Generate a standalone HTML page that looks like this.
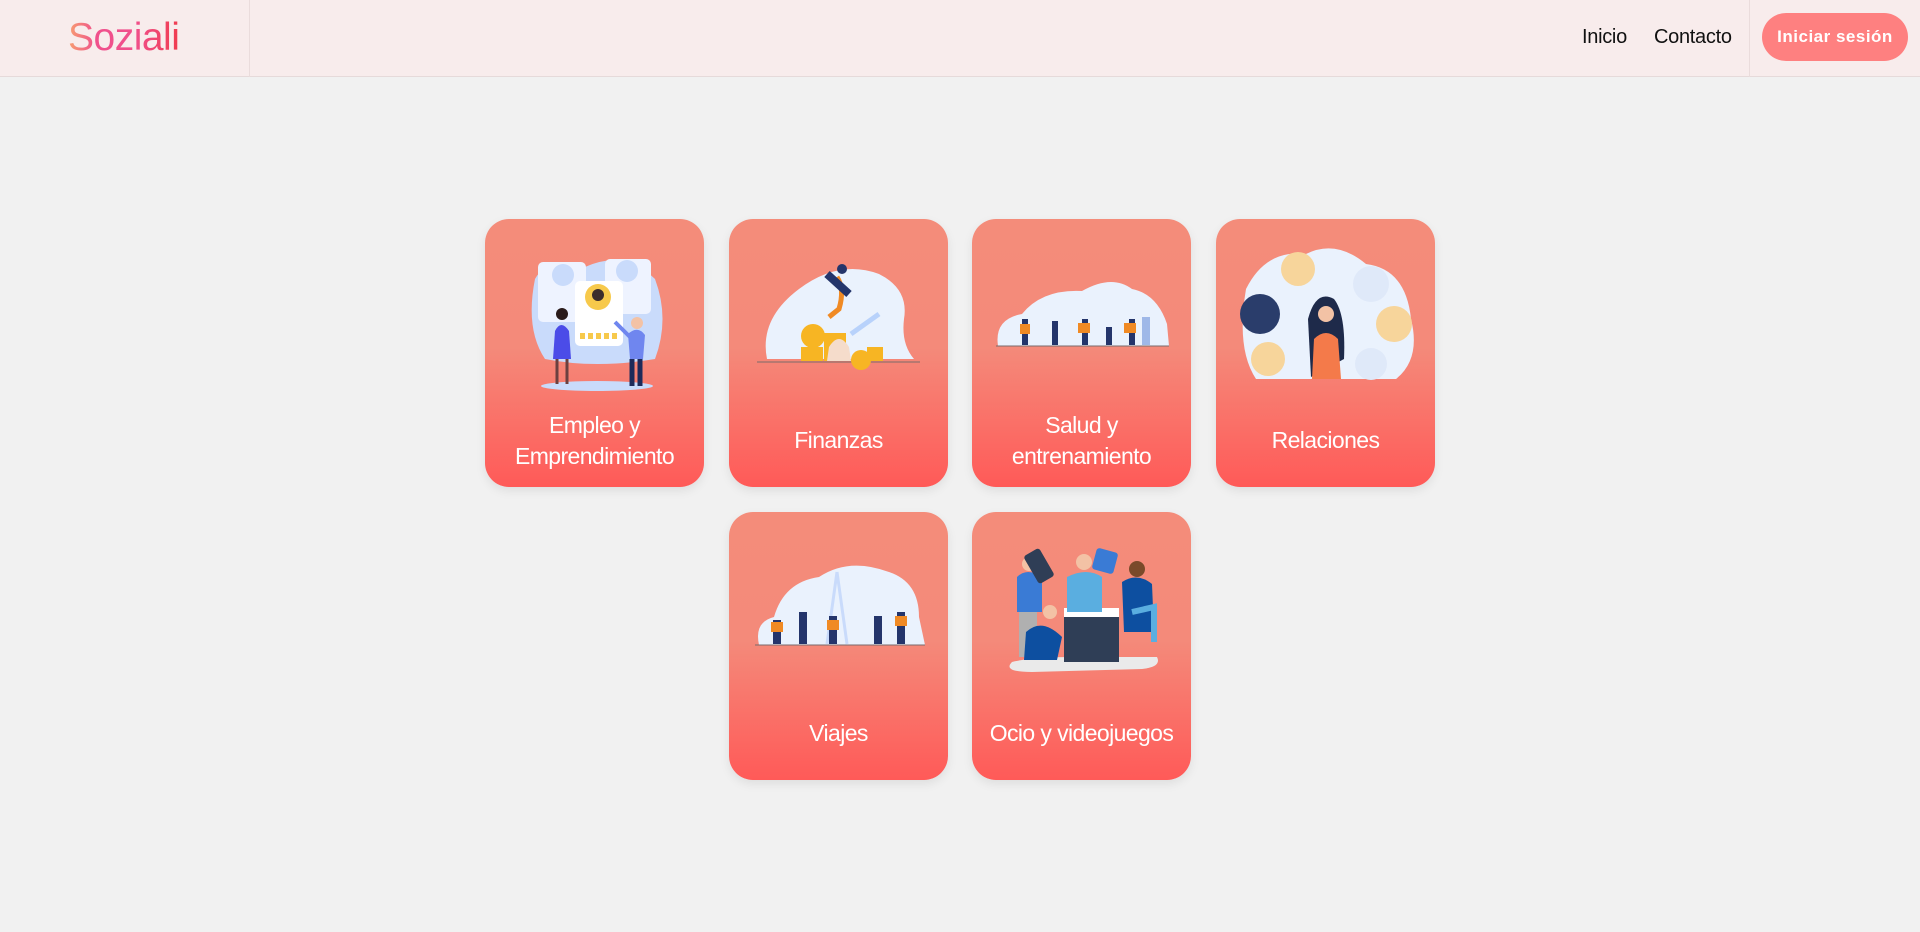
<!DOCTYPE html>
<html><head><meta charset="utf-8"><style>
*{margin:0;padding:0;box-sizing:border-box}
body{width:1920px;height:932px;background:#f1f1f1;font-family:"Liberation Sans",sans-serif;position:relative;overflow:hidden}
.hdr{position:absolute;left:0;top:0;width:1920px;height:77px;background:#f8ecec;border-bottom:1px solid #e6dada}
.logo{position:absolute;left:68px;top:16px;font-size:39px;background:linear-gradient(90deg,#f7a070,#f0508c 25%,#f0508c 60%,#f03c50);-webkit-background-clip:text;color:transparent;letter-spacing:-0.5px}
.vl{position:absolute;top:0;width:1px;height:77px;background:#eadcdc}
.nav{position:absolute;top:26px;font-size:20px;color:#111;letter-spacing:-0.3px}
.btn{position:absolute;left:1762px;top:13px;width:146px;height:48px;border-radius:24px;background:#fe8080;color:#fff;font-size:17px;font-weight:bold;text-align:center;line-height:48px;letter-spacing:.5px}
.card{position:absolute;width:219px;height:268px;border-radius:24px;background:linear-gradient(180deg,#f48c7a 0%,#f48a7a 48%,#ff5a58 100%);box-shadow:0 4px 10px rgba(0,0,0,.08);overflow:hidden}
.card svg{position:absolute;left:0;top:0}
.t{position:absolute;left:0;width:219px;text-align:center;color:#fff;font-size:23px;line-height:31px;letter-spacing:-.6px}
</style></head><body>
<div class="hdr">
<div class="logo">Soziali</div>
<div class="vl" style="left:249px"></div>
<div class="nav" style="left:1582px">Inicio</div>
<div class="nav" style="left:1654px">Contacto</div>
<div class="vl" style="left:1749px"></div>
<div class="btn">Iniciar sesión</div>
</div>

<div class="card" style="left:485px;top:219px">
<svg width="219" height="268"><path d="M50 60 Q60 40 100 48 Q140 30 170 60 Q185 100 170 140 Q110 150 60 140 Q40 110 50 60Z" fill="#c9dbfb"/>
<rect x="53" y="43" width="48" height="60" rx="5" fill="#eef3ff"/><rect x="120" y="40" width="46" height="55" rx="5" fill="#eef3ff"/>
<rect x="90" y="62" width="48" height="65" rx="5" fill="#fff"/><circle cx="113" cy="78" r="13" fill="#f7c94b"/><circle cx="113" cy="76" r="6" fill="#3b2c2c"/>
<circle cx="78" cy="56" r="11" fill="#c9dbfb"/><circle cx="142" cy="52" r="11" fill="#c9dbfb"/>
<path d="M95 117h38" stroke="#f7c94b" stroke-width="6" stroke-dasharray="5 3"/>
<ellipse cx="112" cy="167" rx="56" ry="5" fill="#c9dbfb"/>
<path d="M70 112 Q76 100 84 112 L86 140 L68 140Z" fill="#4b4ce8"/><circle cx="77" cy="95" r="6" fill="#2a1b1b"/><path d="M72 140v25M82 140v25" stroke="#6b4040" stroke-width="3"/>
<path d="M143 115 Q153 106 160 116 L158 140 L145 140Z" fill="#6f86ef"/><circle cx="152" cy="104" r="6" fill="#f3c2a5"/><path d="M147 140v27M155 140v27" stroke="#1e2a5a" stroke-width="5"/><path d="M145 118 L130 103" stroke="#6f86ef" stroke-width="4"/>
</svg><div class="t" style="top:191px">Empleo y<br>Emprendimiento</div></div>

<div class="card" style="left:729px;top:219px">
<svg width="219" height="268"><path d="M38 140 Q30 100 70 70 Q110 40 150 55 Q180 70 175 100 Q172 125 185 140Z" fill="#eaf2fd"/>
<path d="M28 143h163" stroke="#7a6a6a" stroke-width="1"/>
<circle cx="84" cy="117" r="12" fill="#f7b523"/><rect x="72" y="128" width="22" height="14" fill="#f7b523"/>
<rect x="95" y="114" width="22" height="28" fill="#f7b523"/><circle cx="132" cy="141" r="10" fill="#f7b523"/><rect x="138" y="128" width="16" height="14" fill="#f7b523"/>
<path d="M100 128 Q110 112 120 128 L122 142 L98 142Z" fill="#f5dccb"/>
<path d="M122 115 L150 95" stroke="#b8d2fb" stroke-width="5"/>
<path d="M108 58 Q116 70 110 90 L100 98" stroke="#f08a24" stroke-width="5" fill="none"/><path d="M98 55 L120 75" stroke="#24356b" stroke-width="8"/><circle cx="113" cy="50" r="5" fill="#24356b"/>
</svg><div class="t" style="top:206px">Finanzas</div></div>

<div class="card" style="left:972px;top:219px">
<svg width="219" height="268"><path d="M26 127 Q22 100 50 95 Q70 70 110 72 Q140 55 160 70 Q185 75 195 105 L197 127Z" fill="#eaf2fd"/>
<path d="M24 127h173" stroke="#7a6a6a" stroke-width="1"/>
<g fill="#24356b"><rect x="50" y="100" width="6" height="26"/><rect x="80" y="102" width="6" height="24"/><rect x="110" y="100" width="6" height="26"/><rect x="134" y="108" width="6" height="18"/><rect x="157" y="100" width="6" height="26"/></g>
<g fill="#f08a24"><rect x="48" y="105" width="10" height="10"/><rect x="106" y="104" width="12" height="10"/><rect x="152" y="104" width="12" height="10"/></g>
<rect x="170" y="98" width="8" height="28" fill="#9fb8e8"/>
</svg><div class="t" style="top:191px">Salud y<br>entrenamiento</div></div>

<div class="card" style="left:1216px;top:219px">
<svg width="219" height="268"><path d="M30 70 Q50 30 90 35 Q120 20 150 45 Q190 50 195 100 Q205 140 180 160 L40 160 Q20 130 30 70Z" fill="#eaf2fd"/>
<circle cx="44" cy="95" r="20" fill="#2a3d6b"/><circle cx="82" cy="50" r="17" fill="#f7d59b"/><circle cx="155" cy="65" r="18" fill="#dfe9f9"/><circle cx="178" cy="105" r="18" fill="#f7d59b"/><circle cx="52" cy="140" r="17" fill="#f7d59b"/><circle cx="155" cy="145" r="16" fill="#dfe9f9"/>
<path d="M92 100 Q100 70 118 80 Q130 95 128 140 L95 158 Z" fill="#1e2a4a"/><path d="M98 120 Q110 108 122 120 L125 160 L96 160Z" fill="#f47a4a"/><circle cx="110" cy="95" r="8" fill="#f3c2a5"/>
</svg><div class="t" style="top:206px">Relaciones</div></div>

<div class="card" style="left:729px;top:512px">
<svg width="219" height="268"><path d="M30 133 Q25 110 45 105 Q55 70 90 65 Q120 45 160 60 Q190 70 190 105 L196 133Z" fill="#eaf2fd"/>
<path d="M26 133h170" stroke="#7a6a6a" stroke-width="1"/>
<path d="M108 60 L98 132 M108 60 L118 132" stroke="#c9dbfb" stroke-width="3"/>
<g fill="#24356b"><rect x="44" y="108" width="8" height="24"/><rect x="70" y="100" width="8" height="32"/><rect x="100" y="104" width="8" height="28"/><rect x="145" y="104" width="8" height="28"/><rect x="168" y="100" width="8" height="32"/></g>
<g fill="#f08a24"><rect x="42" y="110" width="12" height="10"/><rect x="98" y="108" width="12" height="10"/><rect x="166" y="104" width="12" height="10"/></g>
</svg><div class="t" style="top:206px">Viajes</div></div>

<div class="card" style="left:972px;top:512px">
<svg width="219" height="268"><path d="M40 150 Q60 145 100 145 L185 145 Q190 155 170 157 L60 160 Q30 160 40 150Z" fill="#eaeaea"/>
<path d="M45 65 Q55 55 70 65 L70 100 L45 100Z" fill="#3a7bd5"/><circle cx="57" cy="52" r="7" fill="#f3c2a5"/><rect x="47" y="100" width="18" height="45" fill="#b0b0b0"/>
<rect x="58" y="38" width="18" height="32" rx="3" transform="rotate(-30 67 54)" fill="#2f3e56"/>
<path d="M54 120 Q70 105 90 125 L85 148 L52 148Z" fill="#0d4fa0"/><circle cx="78" cy="100" r="7" fill="#f3c2a5"/>
<rect x="92" y="105" width="55" height="45" fill="#2f3e56"/><rect x="92" y="96" width="55" height="9" fill="#fff"/>
<path d="M95 65 Q115 55 130 65 L130 100 L95 100Z" fill="#5aaee0"/><circle cx="112" cy="50" r="8" fill="#f3c2a5"/>
<rect x="122" y="38" width="22" height="22" rx="3" fill="#3a7bd5" transform="rotate(15 133 49)"/>
<path d="M150 70 Q165 60 180 72 L182 120 L152 120Z" fill="#0d4fa0"/><circle cx="165" cy="57" r="8" fill="#7a4a2a"/>
<path d="M160 100 L182 95 L182 130" stroke="#5aaee0" stroke-width="6" fill="none"/>
</svg><div class="t" style="top:206px">Ocio y videojuegos</div></div>
</body></html>
